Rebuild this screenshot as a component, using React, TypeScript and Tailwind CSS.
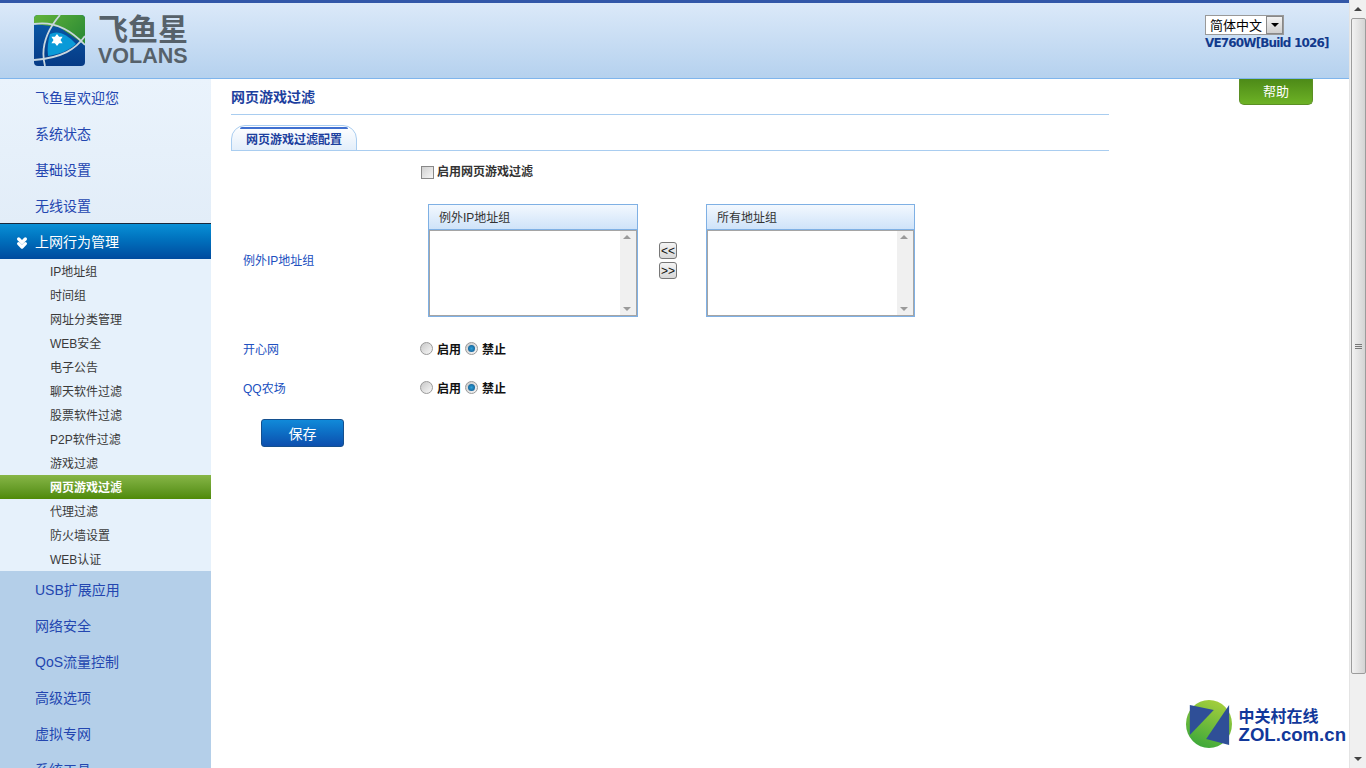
import React from 'react';
import { ChevronsDown } from 'lucide-react';

const cjk = "font-['Liberation_Sans','Noto_Sans_CJK_SC',sans-serif]";

const topItems = ['飞鱼星欢迎您', '系统状态', '基础设置', '无线设置'];
const subItems = [
  'IP地址组',
  '时间组',
  '网址分类管理',
  'WEB安全',
  '电子公告',
  '聊天软件过滤',
  '股票软件过滤',
  'P2P软件过滤',
  '游戏过滤',
  '网页游戏过滤',
  '代理过滤',
  '防火墙设置',
  'WEB认证',
];
const bottomItems = ['USB扩展应用', '网络安全', 'QoS流量控制', '高级选项', '虚拟专网', '系统工具'];

function VolansLogo() {
  return (
    <div className="flex items-start gap-[13px]">
      <svg width="51" height="51" viewBox="0 0 51 51">
        <defs>
          <linearGradient id="lg-blue" x1="0" y1="0" x2="0" y2="1">
            <stop offset="0" stopColor="#0a5cab" />
            <stop offset="1" stopColor="#063a85" />
          </linearGradient>
          <linearGradient id="lg-green" x1="0" y1="0" x2="1" y2="0.6">
            <stop offset="0" stopColor="#62b33a" />
            <stop offset="1" stopColor="#2f8d35" />
          </linearGradient>
          <clipPath id="lg-clip">
            <rect width="51" height="51" rx="4" />
          </clipPath>
        </defs>
        <g clipPath="url(#lg-clip)">
          <rect width="51" height="51" fill="url(#lg-blue)" />
          <path d="M0 0H51V30L25 12L0 9Z" fill="url(#lg-green)" />
          <path d="M16 19C24 15 33 19 42 29C34 36 26 39 14 41C13 33 14 26 16 19Z" fill="#0a9ad8" />
          <path d="M0 9C18 6 36 14 51 30" fill="none" stroke="#c9d6de" strokeWidth="1.8" />
          <path d="M26 0C14 14 6 32 11 51" fill="none" stroke="#c9d6de" strokeWidth="1.8" />
          <path d="M51 21C42 34 28 43 0 45" fill="none" stroke="#c9d6de" strokeWidth="1.8" />
          <path d="M25 21L28 25L33 25L30 29.5L33 34L28 34L25 38L22 34L17 34L20 29.5L17 25L22 25Z" fill="#fff" transform="translate(5.5 4.35) scale(0.7)" />
        </g>
      </svg>
      <div className="flex flex-col w-[92px]">
        <span className={`${cjk} text-[30px] leading-[30px] font-bold text-[#56616a] whitespace-nowrap`}>飞鱼星</span>
        <span className="font-['Liberation_Sans',sans-serif] text-[21.5px] leading-[22px] font-bold text-[#56616a] whitespace-nowrap">VOLANS</span>
      </div>
    </div>
  );
}

function ZolLogo() {
  return (
    <div className="absolute right-[20px] bottom-[20px] flex items-center gap-[7px]">
      <svg width="46" height="48" viewBox="0 0 48 48" preserveAspectRatio="none">
        <defs>
          <linearGradient id="zol-green" x1="0.7" y1="0" x2="0.3" y2="1">
            <stop offset="0" stopColor="#a6cf3c" />
            <stop offset="1" stopColor="#3ca83a" />
          </linearGradient>
        </defs>
        <circle cx="24" cy="24" r="24" fill="url(#zol-green)" />
        <path d="M4 5L29 10L4 35Z" fill="#2f4f97" />
        <path d="M45 5L45 45L21 39Z" fill="#2f4f97" />
      </svg>
      <div className="flex flex-col pt-[4px]">
        <span className={`${cjk} text-[16px] leading-[18px] font-bold text-[#12389a] whitespace-nowrap`}>中关村在线</span>
        <span className="font-['Liberation_Sans',sans-serif] text-[18.6px] leading-[18px] font-bold text-[#12389a] whitespace-nowrap">ZOL.com.cn</span>
      </div>
    </div>
  );
}

function Radio({ checked }: { checked?: boolean }) {
  return (
    <span className="w-[13px] h-[13px] rounded-full border border-[#9a9a9a] bg-gradient-to-br from-[#c8c8c8] to-[#f8f8f8] flex items-center justify-center">
      {checked && <span className="w-[7px] h-[7px] rounded-full bg-[radial-gradient(circle,#2fa0d8,#0b4f86)]" />}
    </span>
  );
}

function RadioPair() {
  return (
    <div className="flex items-center text-[12px] font-bold text-[#111]">
      <Radio />
      <span className="ml-[4px] mt-[2px]">启用</span>
      <span className="ml-[4px]"><Radio checked /></span>
      <span className="ml-[4px] mt-[2px]">禁止</span>
    </div>
  );
}

function AddressPanel({ title, width }: { title: string; width: string }) {
  return (
    <div className={`${width} h-[113px] border border-[#7fb0e4] flex flex-col`}>
      <div className="h-[25px] pl-[10px] pt-[2px] flex items-center text-[12px] text-[#333] bg-gradient-to-b from-[#f3f8fe] to-[#cfe3f9] border-b border-[#7fb0e4]">
        {title}
      </div>
      <div className="flex-1 flex border border-[#a5a5a5]">
        <div className="flex-1 bg-white" />
        <div className="w-[16px] bg-[#f0f0f0] flex flex-col items-center justify-between py-[4px] pr-[2px]">
          <span className="w-0 h-0 border-x-[4px] border-x-transparent border-b-[4px] border-b-[#9a9a9a]" />
          <span className="w-0 h-0 border-x-[4px] border-x-transparent border-t-[4px] border-t-[#9a9a9a]" />
        </div>
      </div>
    </div>
  );
}

function MoveButton({ label }: { label: string }) {
  return (
    <button className="w-[18px] h-[17px] rounded-[3px] border border-[#777] bg-gradient-to-b from-[#f4f4f4] to-[#d8d8d8] text-[12px] leading-[14px] text-[#111] font-['Liberation_Sans',sans-serif] flex items-center justify-center">
      {label}
    </button>
  );
}

function FakeScrollbar() {
  return (
    <div className="w-[17px] h-full shrink-0 bg-[#f0f0f0] border-l border-[#e4e4e4] flex flex-col items-center">
      <div className="h-[18px] flex items-center justify-center">
        <span className="w-0 h-0 border-x-[4px] border-x-transparent border-b-[4px] border-b-[#444]" />
      </div>
      <div className="w-[15px] h-[656px] rounded-[2px] border border-[#9c9c9c] bg-gradient-to-r from-[#f2f2f2] to-[#d4d4d4] flex flex-col items-center justify-center gap-[1px]">
        <span className="w-[7px] h-[1px] bg-[#777]" />
        <span className="w-[7px] h-[1px] bg-[#777]" />
        <span className="w-[7px] h-[1px] bg-[#777]" />
      </div>
      <div className="mt-auto h-[18px] flex items-center justify-center">
        <span className="w-0 h-0 border-x-[4px] border-x-transparent border-t-[4px] border-t-[#444]" />
      </div>
    </div>
  );
}

export default function App() {
  return (
    <div className={`${cjk} relative w-full h-screen overflow-hidden flex bg-white`}>
      <div className="flex-1 min-w-0 flex flex-col">
        {/* Header */}
        <header className="h-[79px] shrink-0 border-t-[3px] border-t-[#3257a8] border-b border-b-[#7fb5ec] bg-gradient-to-b from-[#dbe9f9] to-[#b5d1ee] flex justify-between pl-[34px] pr-[20px]">
          <div className="pt-[12px]">
            <VolansLogo />
          </div>
          <div className="pt-[12px] w-[124px]">
            <div className="w-[79px] h-[20px] border border-[#999] bg-white flex items-center justify-between pl-[4px] text-[13px] text-black">
              <span className="leading-none whitespace-nowrap">简体中文</span>
              <span className="w-[17px] h-[18px] border border-[#888] bg-gradient-to-b from-[#f2f2f2] to-[#cfcfcf] flex items-center justify-center">
                <span className="w-0 h-0 border-x-[4px] border-x-transparent border-t-[4px] border-t-black" />
              </span>
            </div>
            <div className="mt-[1px] text-[12px] leading-[15px] font-bold text-[#123a8c] font-['DejaVu_Sans',sans-serif] tracking-[-0.85px] whitespace-nowrap">
              VE760W[Build 1026]
            </div>
          </div>
        </header>

        <div className="flex-1 min-h-0 flex">
          {/* Sidebar */}
          <aside className="w-[211px] shrink-0 overflow-hidden flex flex-col">
            <nav className="bg-gradient-to-b from-[#eaf3fc] to-[#e2edf8] shrink-0 pt-[1px]">
              {topItems.map((item) => (
                <div key={item} className="h-[36px] pl-[35px] flex items-center text-[14px] text-[#2346b0]">
                  {item}
                </div>
              ))}
            </nav>
            <div className="h-[36px] shrink-0 border-t border-t-[#18283c] -mt-[1px] pt-[2px] bg-gradient-to-b from-[#0a90d6] to-[#004a9e] flex items-center pl-[14px] text-[14px] text-white">
              <ChevronsDown size={16} strokeWidth={5} className="text-white" />
              <span className="ml-[5px]">上网行为管理</span>
            </div>
            <div className="bg-[#e6f1fb] shrink-0">
              {subItems.map((item) => (
                <div
                  key={item}
                  className={
                    item === '网页游戏过滤'
                      ? 'h-[24px] pl-[50px] pt-[1px] flex items-center text-[12px] font-bold text-white bg-gradient-to-b from-[#87b646] to-[#4f8a05]'
                      : 'h-[24px] pl-[50px] pt-[1px] flex items-center text-[12px] text-[#3a3a3a]'
                  }
                >
                  {item}
                </div>
              ))}
            </div>
            <div className="flex-1 bg-[#b4cfe9] min-h-0">
              {bottomItems.map((item) => (
                <div key={item} className="h-[36px] pl-[35px] pt-[2px] flex items-center text-[14px] text-[#2346b0]">
                  {item}
                </div>
              ))}
            </div>
          </aside>

          {/* Content */}
          <main className="flex-1 min-w-0 flex pl-[20px]">
            <div className="w-[878px] shrink-0">
              <h1 className="h-[36px] pt-[2px] border-b border-[#a9cdf0] flex items-center text-[14px] font-bold text-[#1c3f9e]">
                网页游戏过滤
              </h1>
              <div className="h-[36px] border-b border-[#a9cdf0] flex items-end">
                <div className="w-[126px] h-[26px] -mb-px rounded-t-[14px] border border-[#a9cdf0] bg-gradient-to-b from-white to-[#e3eefa] flex flex-col items-center text-[12px] font-bold text-[#1c3f9e]">
                  <span className="w-[108px] h-[2px] mt-[1px] bg-[#3f6fd0] rounded-t-[2px]" />
                  <span className="mt-[2px] leading-[18px]">网页游戏过滤配置</span>
                </div>
              </div>

              <div className="pl-[12px]">
                <div className="h-[40px] pl-[178px] pt-[2px] flex items-center text-[12px] font-bold text-[#333]">
                  <span className="w-[13px] h-[13px] border border-[#888] bg-gradient-to-br from-[#d0d0d0] to-[#f6f6f6]" />
                  <span className="ml-[3px]">启用网页游戏过滤</span>
                </div>

                <div className="mt-[13px] flex items-center">
                  <div className="w-[185px] text-[12px] text-[#2050c0]">例外IP地址组</div>
                  <AddressPanel title="例外IP地址组" width="w-[210px]" />
                  <div className="w-[68px] flex flex-col items-center gap-[3px] pr-[8px]">
                    <MoveButton label="<<" />
                    <MoveButton label=">>" />
                  </div>
                  <AddressPanel title="所有地址组" width="w-[209px]" />
                </div>

                <div className="mt-[12px] h-[39px] flex items-center">
                  <div className="w-[177px] pt-[2px] text-[12px] text-[#2050c0]">开心网</div>
                  <RadioPair />
                </div>
                <div className="h-[39px] flex items-center">
                  <div className="w-[177px] pt-[2px] text-[12px] text-[#2050c0]">QQ农场</div>
                  <RadioPair />
                </div>

                <button className="mt-[12px] ml-[18px] w-[83px] h-[28px] pt-[2px] rounded-[3px] border border-[#14508f] bg-gradient-to-b from-[#118ad9] to-[#0e4fae] text-[14px] text-white flex items-center justify-center">
                  保存
                </button>
              </div>
            </div>
            <button className="ml-[130px] w-[74px] h-[26px] pt-[1px] rounded-b-[5px] border border-[#5b8f24] border-t-0 bg-gradient-to-b from-[#4d8a18] to-[#6db225] text-[13px] text-white flex items-center justify-center">
              帮助
            </button>
          </main>
        </div>
      </div>
      <FakeScrollbar />
      <ZolLogo />
    </div>
  );
}
